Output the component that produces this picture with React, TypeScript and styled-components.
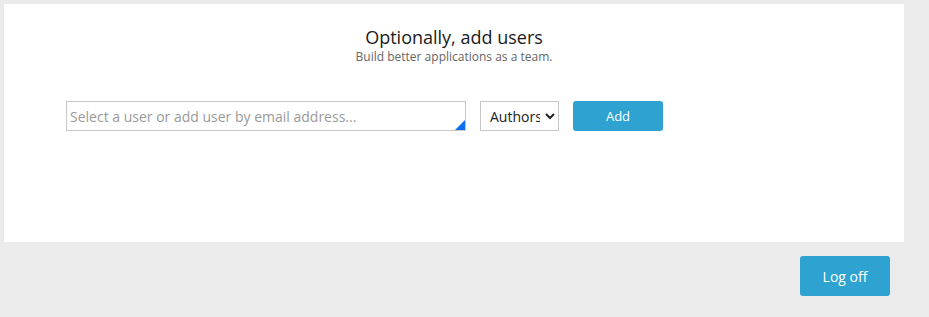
import styled, { createGlobalStyle } from 'styled-components'

const GlobalStyle = createGlobalStyle`
  html, body {
    margin: 0;
    padding: 0;
    background: #ebebeb;
    font-family: 'Open Sans', 'Noto Sans', sans-serif;
  }
`

const Page = styled.div`
  padding: 4px 25px 0 4px;
`

const Panel = styled.div`
  background: #ffffff;
  width: 900px;
  height: 238px;
  box-sizing: border-box;
  padding-top: 21px;
`

const Header = styled.div`
  text-align: center;

  h2 {
    margin: 0;
    font-size: 18px;
    font-weight: 400;
    color: #1a1a1a;
    line-height: 24px;
  }

  p {
    margin: 0;
    font-size: 12px;
    color: #666666;
    line-height: 16px;
  }
`

const FormRow = styled.div`
  display: flex;
  align-items: center;
  gap: 14px;
  margin: 36px 0 0 62px;
`

const InputBox = styled.div`
  position: relative;
  width: 400px;
  height: 30px;

  input {
    width: 100%;
    height: 100%;
    box-sizing: border-box;
    border: 1px solid #c8c8c8;
    padding: 0 3px;
    font-family: inherit;
    font-size: 14px;
    color: #333;
    outline: none;

    &::placeholder {
      color: #9a9a9a;
    }
  }
`

const Corner = styled.span`
  position: absolute;
  right: 1px;
  bottom: 1px;
  width: 0;
  height: 0;
  border-left: 10px solid transparent;
  border-bottom: 10px solid #0d6ef0;
`

const RoleSelect = styled.select`
  width: 79px;
  height: 30px;
  border: 1px solid #c8c8c8;
  background: #fff;
  font-family: inherit;
  font-size: 14px;
  color: #222;
  padding: 0 2px 0 5px;
  border-radius: 0;
`

const Button = styled.button<{ tall?: boolean }>`
  width: 90px;
  height: ${(p) => (p.tall ? '40px' : '30px')};
  border: 0;
  border-radius: 3px;
  background: #2ea3d2;
  color: #ffffff;
  font-family: inherit;
  font-size: ${(p) => (p.tall ? '14px' : '13px')};
  cursor: pointer;
`

const Footer = styled.div`
  display: flex;
  justify-content: flex-end;
  width: 900px;
  padding: 14px 14px 14px 0;
  box-sizing: border-box;
`

export default function App() {
  return (
    <>
      <GlobalStyle />
      <Page>
        <Panel>
          <Header>
            <h2>Optionally, add users</h2>
            <p>Build better applications as a team.</p>
          </Header>
          <FormRow>
            <InputBox>
              <input placeholder="Select a user or add user by email address..." />
              <Corner />
            </InputBox>
            <RoleSelect defaultValue="Authors">
              <option>Authors</option>
              <option>Readers</option>
            </RoleSelect>
            <Button type="button">Add</Button>
          </FormRow>
        </Panel>
        <Footer>
          <Button type="button" tall>
            Log off
          </Button>
        </Footer>
      </Page>
    </>
  )
}
